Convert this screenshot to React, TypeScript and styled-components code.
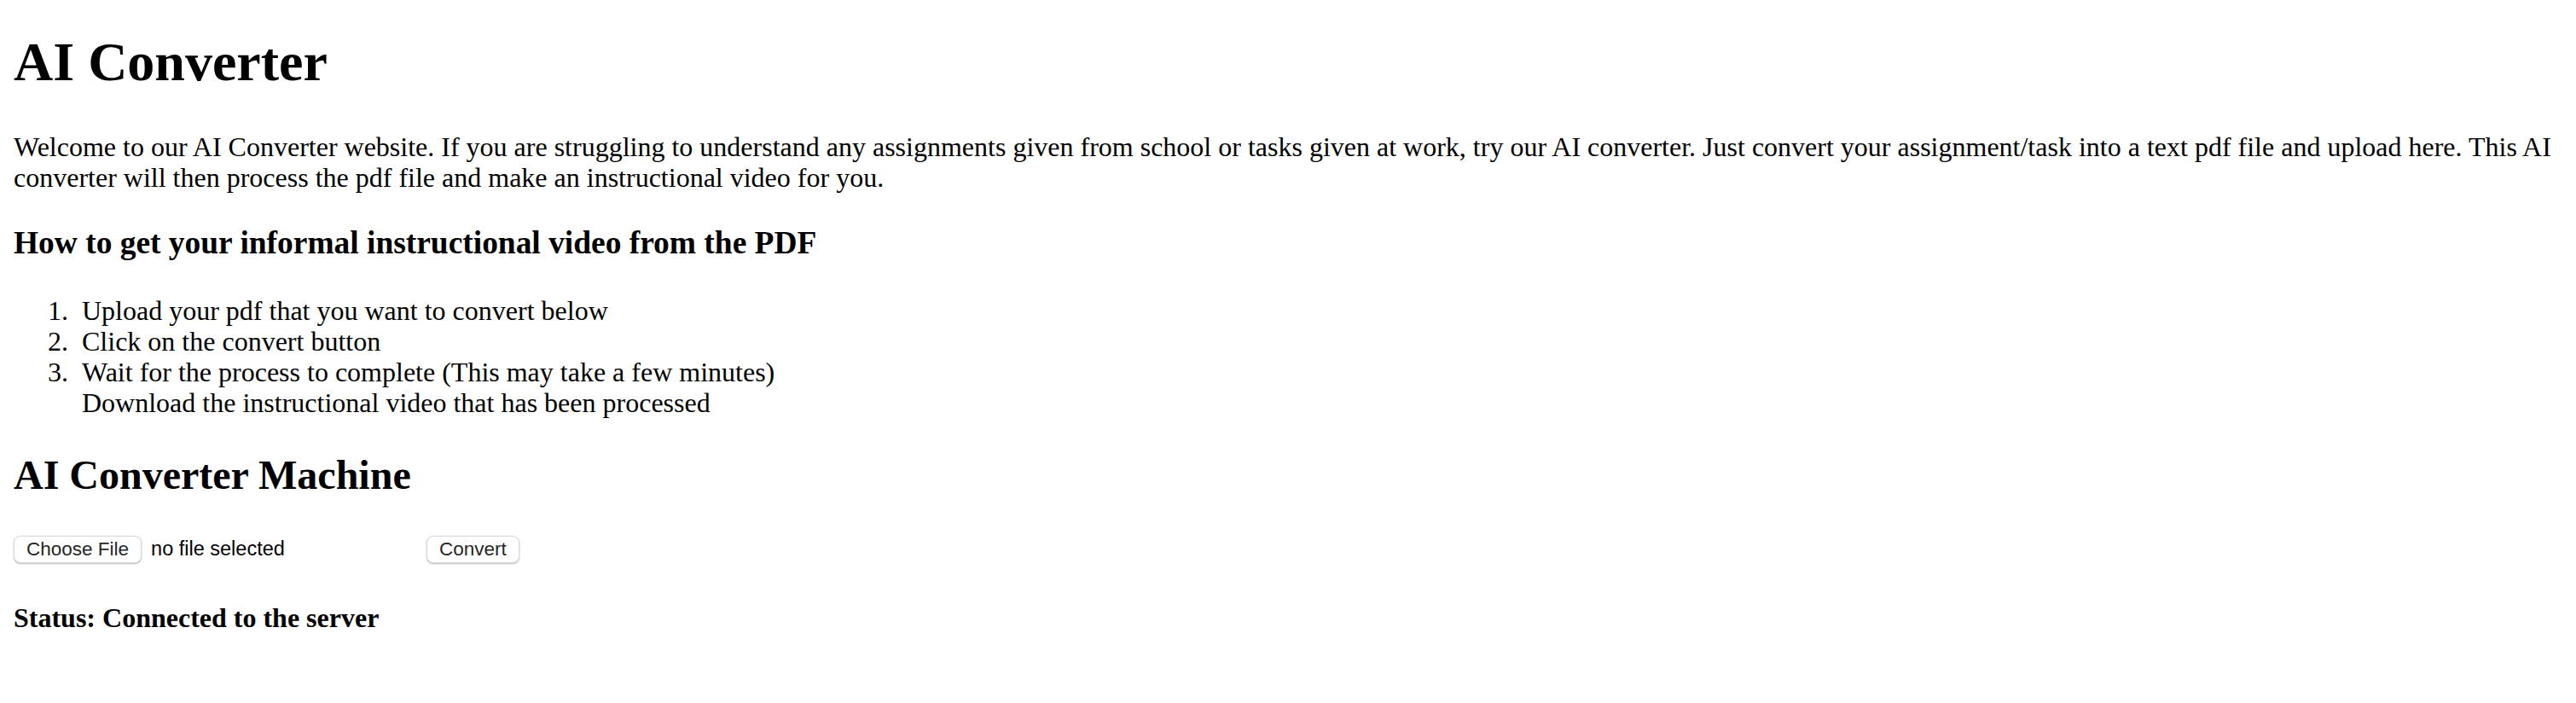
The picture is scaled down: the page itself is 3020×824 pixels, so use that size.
import React from "react";
import styled, { createGlobalStyle } from "styled-components";

const GlobalStyle = createGlobalStyle`
  html, body {
    margin: 0;
    padding: 0;
    background: #ffffff;
  }
  body {
    font-family: "Liberation Serif", "Times New Roman", serif;
    color: #000000;
  }
`;

const Page = styled.main`
  display: flex;
  flex-direction: column;
  align-items: stretch;
  padding: 37px 16px 40px 16px;
  font-family: "Liberation Serif", "Times New Roman", serif;
`;

const Title = styled.h1`
  margin: 0;
  font-size: 64px;
  line-height: 72px;
  font-weight: 700;
`;

const Intro = styled.p`
  margin: 45px 0 0 0;
  font-size: 32px;
  line-height: 36px;
`;

const StepsHeading = styled.h3`
  margin: 38px 0 0 0;
  font-size: 37.44px;
  line-height: 42px;
  font-weight: 700;
`;

const Steps = styled.ol`
  margin: 39.5px 0 0 0;
  padding-left: 80px;
  font-size: 32px;
  line-height: 36px;
`;

const Step = styled.li<{ $plain?: boolean }>`
  list-style-type: ${(p) => (p.$plain ? "none" : "decimal")};

  &::marker {
    content: ${(p) => (p.$plain ? "none" : `counter(list-item) ".\\00a0\\00a0"`)};
  }
`;

const MachineHeading = styled.h2`
  margin: 40px 0 0 0;
  font-size: 48px;
  line-height: 54px;
  font-weight: 700;
`;

const FormRow = styled.div`
  display: flex;
  align-items: center;
  gap: 8px;
  margin-top: 44px;
  height: 32px;
`;

const FilePicker = styled.label`
  display: flex;
  align-items: center;
  gap: 11px;
  width: 476px;
`;

const NativeButton = styled.button`
  box-sizing: border-box;
  height: 32px;
  padding: 0 14px;
  border: 1px solid #d9d9d9;
  border-radius: 8px;
  background: #ffffff;
  box-shadow: 0 1px 2px rgba(0, 0, 0, 0.28);
  font-family: "Liberation Sans", Arial, sans-serif;
  font-size: 22.5px;
  line-height: 30px;
  color: #262626;
  cursor: pointer;
`;

const FileStatus = styled.span`
  font-family: "Liberation Sans", Arial, sans-serif;
  font-size: 23.5px;
  color: #000000;
`;

const HiddenInput = styled.input`
  display: none;
`;

const Status = styled.h4`
  margin: 46px 0 0 0;
  font-size: 32px;
  line-height: 36px;
  font-weight: 700;
`;

export default function App() {
  return (
    <>
      <GlobalStyle />
      <Page>
        <Title>AI Converter</Title>
        <Intro>
          Welcome to our AI Converter website. If you are struggling to understand any assignments given from
          school or tasks given at work, try our AI converter. Just convert your assignment/task into a text pdf
          file and upload here. This AI converter will then process the pdf file and make an instructional video
          for you.
        </Intro>
        <StepsHeading>How to get your informal instructional video from the PDF</StepsHeading>
        <Steps>
          <Step>Upload your pdf that you want to convert below</Step>
          <Step>Click on the convert button</Step>
          <Step>Wait for the process to complete (This may take a few minutes)</Step>
          <Step $plain>Download the instructional video that has been processed</Step>
        </Steps>
        <MachineHeading>AI Converter Machine</MachineHeading>
        <FormRow>
          <FilePicker>
            <NativeButton as="span">Choose File</NativeButton>
            <FileStatus>no file selected</FileStatus>
            <HiddenInput type="file" accept="application/pdf" />
          </FilePicker>
          <NativeButton type="button">Convert</NativeButton>
        </FormRow>
        <Status>Status: Connected to the server</Status>
      </Page>
    </>
  );
}
